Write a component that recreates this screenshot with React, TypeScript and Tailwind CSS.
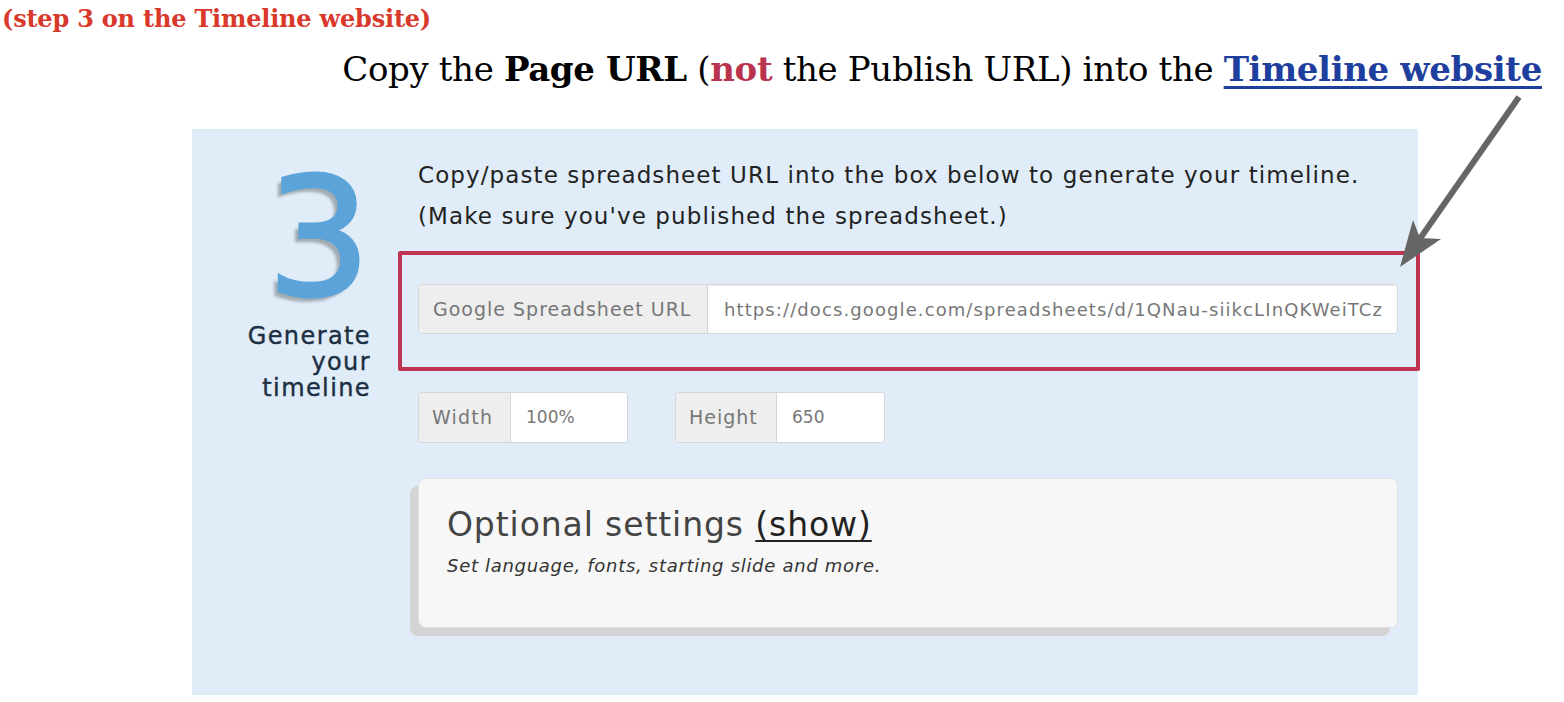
import React from "react";

export default function App() {
  return (
    <div className="relative w-[1564px] h-[702px] overflow-hidden bg-white">
      <div className="pl-[2px] pt-[4px] text-[24px] leading-[30px] font-bold text-[#d8392b] [font-family:'DejaVu_Serif',serif] tracking-[-0.2px]">
        (step 3 on the Timeline website)
      </div>
      <div className="flex justify-end pr-[22px] mt-[12px] text-[34px] leading-[46px] text-black [font-family:'DejaVu_Serif',serif] tracking-[-0.35px]">
        <span>
          Copy the <b>Page URL</b> (<b className="text-[#b9334f]">not</b> the Publish URL) into the{" "}
          <b className="text-[#1f3f9f] underline decoration-[3px] underline-offset-[5px]">Timeline website</b>
        </span>
      </div>

      <div className="ml-[192px] mt-[37px] w-[1226px] h-[566px] bg-[#e0edf8] flex [font-family:'DejaVu_Sans',sans-serif]">
        <div className="w-[179px] flex flex-col items-end pt-[45px]">
          <div className="text-[164px] leading-[130px] text-[#5ba3d8] [text-shadow:-5px_5px_3px_rgba(0,0,0,0.28)] pr-[0px] [-webkit-text-stroke:3px_#5ba3d8]">3</div>
          <div className="text-right text-[24px] leading-[26px] text-[#1d2f42] mt-[19px] tracking-[1.4px] [-webkit-text-stroke:0.4px_#1d2f42]">
            Generate
            <br />
            your
            <br />
            timeline
          </div>
        </div>
        <div className="ml-[47px] w-[980px] pt-[26px] flex flex-col">
          <div className="text-[23px] leading-[41px] text-[#222] tracking-[1.1px]">
            Copy/paste spreadsheet URL into the box below to generate your timeline.
            <br />
            (Make sure you've published the spreadsheet.)
          </div>
          <div className="mt-[47px] h-[50px] flex rounded-[4px] border border-[#d6d6d6] overflow-hidden">
            <div className="w-[289px] bg-[#eeeeee] border-r border-[#d6d6d6] flex items-center pl-[14px] text-[19px] text-[#777] tracking-[1px]">
              Google Spreadsheet URL
            </div>
            <div className="flex-1 bg-white flex items-center pl-[16px] text-[18px] text-[#777] tracking-[1.1px] [box-shadow:inset_0_1px_2px_rgba(0,0,0,0.08)]">
              https://docs.google.com/spreadsheets/d/1QNau-siikcLInQKWeiTCz
            </div>
          </div>
          <div className="mt-[58px] flex gap-[47px]">
            <div className="w-[210px] h-[51px] flex rounded-[4px] border border-[#d6d6d6] overflow-hidden">
              <div className="w-[92px] bg-[#eeeeee] border-r border-[#d6d6d6] flex items-center pl-[13px] text-[19px] text-[#777] tracking-[1.2px]">
                Width
              </div>
              <div className="flex-1 bg-white flex items-center pl-[15px] text-[17px] text-[#777]">100%</div>
            </div>
            <div className="w-[210px] h-[51px] flex rounded-[4px] border border-[#d6d6d6] overflow-hidden">
              <div className="w-[101px] bg-[#eeeeee] border-r border-[#d6d6d6] flex items-center pl-[13px] text-[19px] text-[#777] tracking-[1px]">
                Height
              </div>
              <div className="flex-1 bg-white flex items-center pl-[15px] text-[17px] text-[#777]">650</div>
            </div>
          </div>
          <div className="mt-[35px] h-[150px] rounded-[8px] bg-[#f7f7f7] border border-[#e2e2e2] [box-shadow:-8px_8px_0_#d4d4d4] pl-[28px] pt-[26px]">
            <div className="text-[33px] leading-[40px] text-[#444] tracking-[0.9px]">
              Optional settings <span className="text-[#222] underline decoration-[2px] underline-offset-[4px]">(show)</span>
            </div>
            <div className="mt-[7px] text-[18px] italic text-[#333] tracking-[0.7px]">Set language, fonts, starting slide and more.</div>
          </div>
        </div>
      </div>

      <div className="absolute left-[398px] top-[251px] w-[1022px] h-[120px] border-[4px] border-[#bf3451] rounded-[2px]" />

      <svg className="absolute left-0 top-0" width="1564" height="702" viewBox="0 0 1564 702">
        <line x1="1519" y1="97" x2="1412" y2="250" stroke="#666" strokeWidth="6" />
        <polygon points="1400,267 1413,220 1420,238 1441,239" fill="#666" />
      </svg>
    </div>
  );
}
